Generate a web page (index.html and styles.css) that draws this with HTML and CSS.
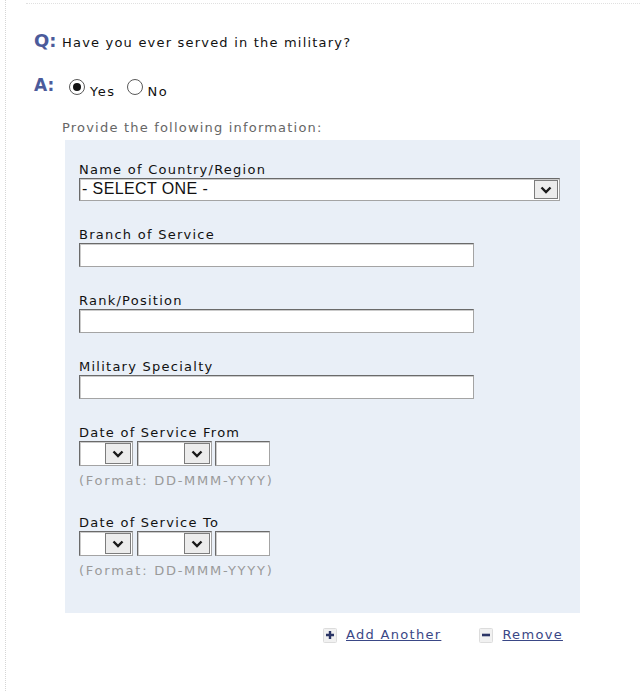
FILE: index.html
```html
<!DOCTYPE html>
<html>
<head>
<meta charset="utf-8">
<link rel="stylesheet" href="styles.css">
</head>
<body>
<div class="page">
  <div class="topline"></div>
  <div class="qa">
    <div class="row q-row"><span class="mark">Q:</span><span class="question">Have you ever served in the military?</span></div>
    <div class="row a-row"><span class="mark">A:</span>
      <span class="radio checked"></span><span class="opt">Yes</span>
      <span class="radio second"></span><span class="opt">No</span>
    </div>
    <div class="provide">Provide the following information:</div>
    <div class="panel">
      <div class="field">
        <div class="label">Name of Country/Region</div>
        <div class="select wide"><span class="sel-text">- SELECT ONE -</span><span class="btn"><svg width="12" height="8" viewBox="0 0 12 8"><path d="M1.5 1.5 L6 6 L10.5 1.5" fill="none" stroke="#1a1a1a" stroke-width="2.4"/></svg></span></div>
      </div>
      <div class="field">
        <div class="label">Branch of Service</div>
        <div class="input text"></div>
      </div>
      <div class="field">
        <div class="label">Rank/Position</div>
        <div class="input text"></div>
      </div>
      <div class="field">
        <div class="label">Military Specialty</div>
        <div class="input text"></div>
      </div>
      <div class="field">
        <div class="label">Date of Service From</div>
        <div class="date">
          <div class="select day"><span class="sel-text"></span><span class="btn"><svg width="12" height="8" viewBox="0 0 12 8"><path d="M1.5 1.5 L6 6 L10.5 1.5" fill="none" stroke="#1a1a1a" stroke-width="2.4"/></svg></span></div>
          <div class="select month"><span class="sel-text"></span><span class="btn"><svg width="12" height="8" viewBox="0 0 12 8"><path d="M1.5 1.5 L6 6 L10.5 1.5" fill="none" stroke="#1a1a1a" stroke-width="2.4"/></svg></span></div>
          <div class="input year"></div>
        </div>
        <div class="format">(Format: DD-MMM-YYYY)</div>
      </div>
      <div class="field">
        <div class="label">Date of Service To</div>
        <div class="date">
          <div class="select day"><span class="sel-text"></span><span class="btn"><svg width="12" height="8" viewBox="0 0 12 8"><path d="M1.5 1.5 L6 6 L10.5 1.5" fill="none" stroke="#1a1a1a" stroke-width="2.4"/></svg></span></div>
          <div class="select month"><span class="sel-text"></span><span class="btn"><svg width="12" height="8" viewBox="0 0 12 8"><path d="M1.5 1.5 L6 6 L10.5 1.5" fill="none" stroke="#1a1a1a" stroke-width="2.4"/></svg></span></div>
          <div class="input year"></div>
        </div>
        <div class="format">(Format: DD-MMM-YYYY)</div>
      </div>
    </div>
    <div class="actions">
      <span class="act"><span class="icon"><svg width="14" height="15" viewBox="0 0 14 15"><rect x="0.5" y="0.5" width="13" height="14" rx="1" fill="#f1f1f1" stroke="#dcdcdc"/><path d="M7 3 V11 M3 7 H11" stroke="#2b3566" stroke-width="2.4"/></svg></span><a class="link" href="#">Add Another</a></span>
      <span class="act"><span class="icon"><svg width="14" height="15" viewBox="0 0 14 15"><rect x="0.5" y="0.5" width="13" height="14" rx="1" fill="#f1f1f1" stroke="#dcdcdc"/><path d="M3 7 H11" stroke="#2b3566" stroke-width="2.6"/></svg></span><a class="link" href="#">Remove</a></span>
    </div>
  </div>
</div>
</body>
</html>
```
FILE: styles.css
```css
html, body {
  margin: 0;
  padding: 0;
  background: #fff;
}
body {
  font-family: "DejaVu Sans", Verdana, sans-serif;
  color: #111;
  font-size: 13px;
}
.page {
  margin-left: 5px;
  border-left: 1px dotted #d6d6d6;
  height: 691px;
  box-sizing: border-box;
  padding-top: 3px;
}
.topline {
  margin-left: 20px;
  border-top: 1px dotted #e0e0e0;
}
.qa {
  padding-left: 28px;
}
.row {
  display: flex;
  align-items: baseline;
  height: 22px;
}
.q-row {
  margin-top: 26px;
}
.mark {
  color: #4b5b9b;
  font-weight: bold;
  font-size: 18px;
  line-height: 22px;
  width: 28px;
  flex: none;
}
.question {
  font-size: 13px;
  letter-spacing: 1.2px;
}
.a-row {
  margin-top: 22px;
  align-items: center;
}
.a-row .mark {
  font-size: 17px;
}
.radio {
  width: 16px;
  height: 16px;
  border: 1px solid #5a5a5a;
  border-radius: 50%;
  box-sizing: border-box;
  background: #fff;
  display: inline-flex;
  align-items: center;
  justify-content: center;
  margin-top: 4px;
  margin-left: 7px;
  flex: none;
}
.radio.second {
  margin-left: 11px;
}
.radio.checked::after {
  content: "";
  width: 8px;
  height: 8px;
  border-radius: 50%;
  background: #111;
}
.opt {
  font-size: 13px;
  letter-spacing: 1.5px;
  margin-left: 5px;
  margin-top: 12px;
}
.provide {
  margin-top: 24px;
  margin-left: 28px;
  color: #666;
  font-size: 13px;
  letter-spacing: 1.2px;
  line-height: 16px;
}
.panel {
  margin-left: 31px;
  margin-top: 4px;
  width: 515px;
  height: 473px;
  background: #e9eff7;
  box-sizing: border-box;
  padding: 22px 14px 0 14px;
}
.field {
  margin-bottom: 26px;
}
.label {
  font-size: 13px;
  line-height: 16px;
  letter-spacing: 1.25px;
  color: #111;
}
.select, .input {
  background: #fff;
  border: 1px solid #6a6a6a;
  border-right-color: #a4a4a4;
  border-bottom-color: #a4a4a4;
  box-shadow: inset 1px 1px 0 #cbcbcb;
  box-sizing: border-box;
  height: 24px;
  display: flex;
}
.select.wide {
  width: 481px;
  height: 23px;
}
.input.text {
  width: 395px;
}
.sel-text {
  flex: 1;
  font-family: "Liberation Sans", Arial, sans-serif;
  font-size: 16px;
  letter-spacing: 0.4px;
  line-height: 20px;
  padding-left: 2px;
  color: #111;
}
.btn {
  width: 24px;
  margin: 1px;
  background: #ececec;
  border: 1px solid #7c7c7c;
  box-sizing: border-box;
  display: flex;
  align-items: center;
  justify-content: center;
}
.date {
  display: flex;
  height: 25px;
}
.date .select, .date .input {
  height: 25px;
}
.select.day { width: 54px; margin-right: 4px; }
.select.month { width: 75px; margin-right: 3px; }
.input.year { width: 55px; }
.date .btn { width: 26px; }
.format {
  color: #9a9a9a;
  font-size: 13px;
  letter-spacing: 1.75px;
  line-height: 16px;
  margin-top: 7px;
}
.actions {
  display: flex;
  margin-left: 289px;
  margin-top: 13px;
  line-height: 16px;
}
.act {
  display: flex;
  align-items: center;
}
.act + .act {
  margin-left: 38px;
}
.icon {
  display: inline-flex;
  margin-right: 9px;
  margin-top: 2px;
}
.link {
  color: #3a4786;
  font-size: 13px;
  letter-spacing: 1.3px;
  text-decoration: underline;
}
```
